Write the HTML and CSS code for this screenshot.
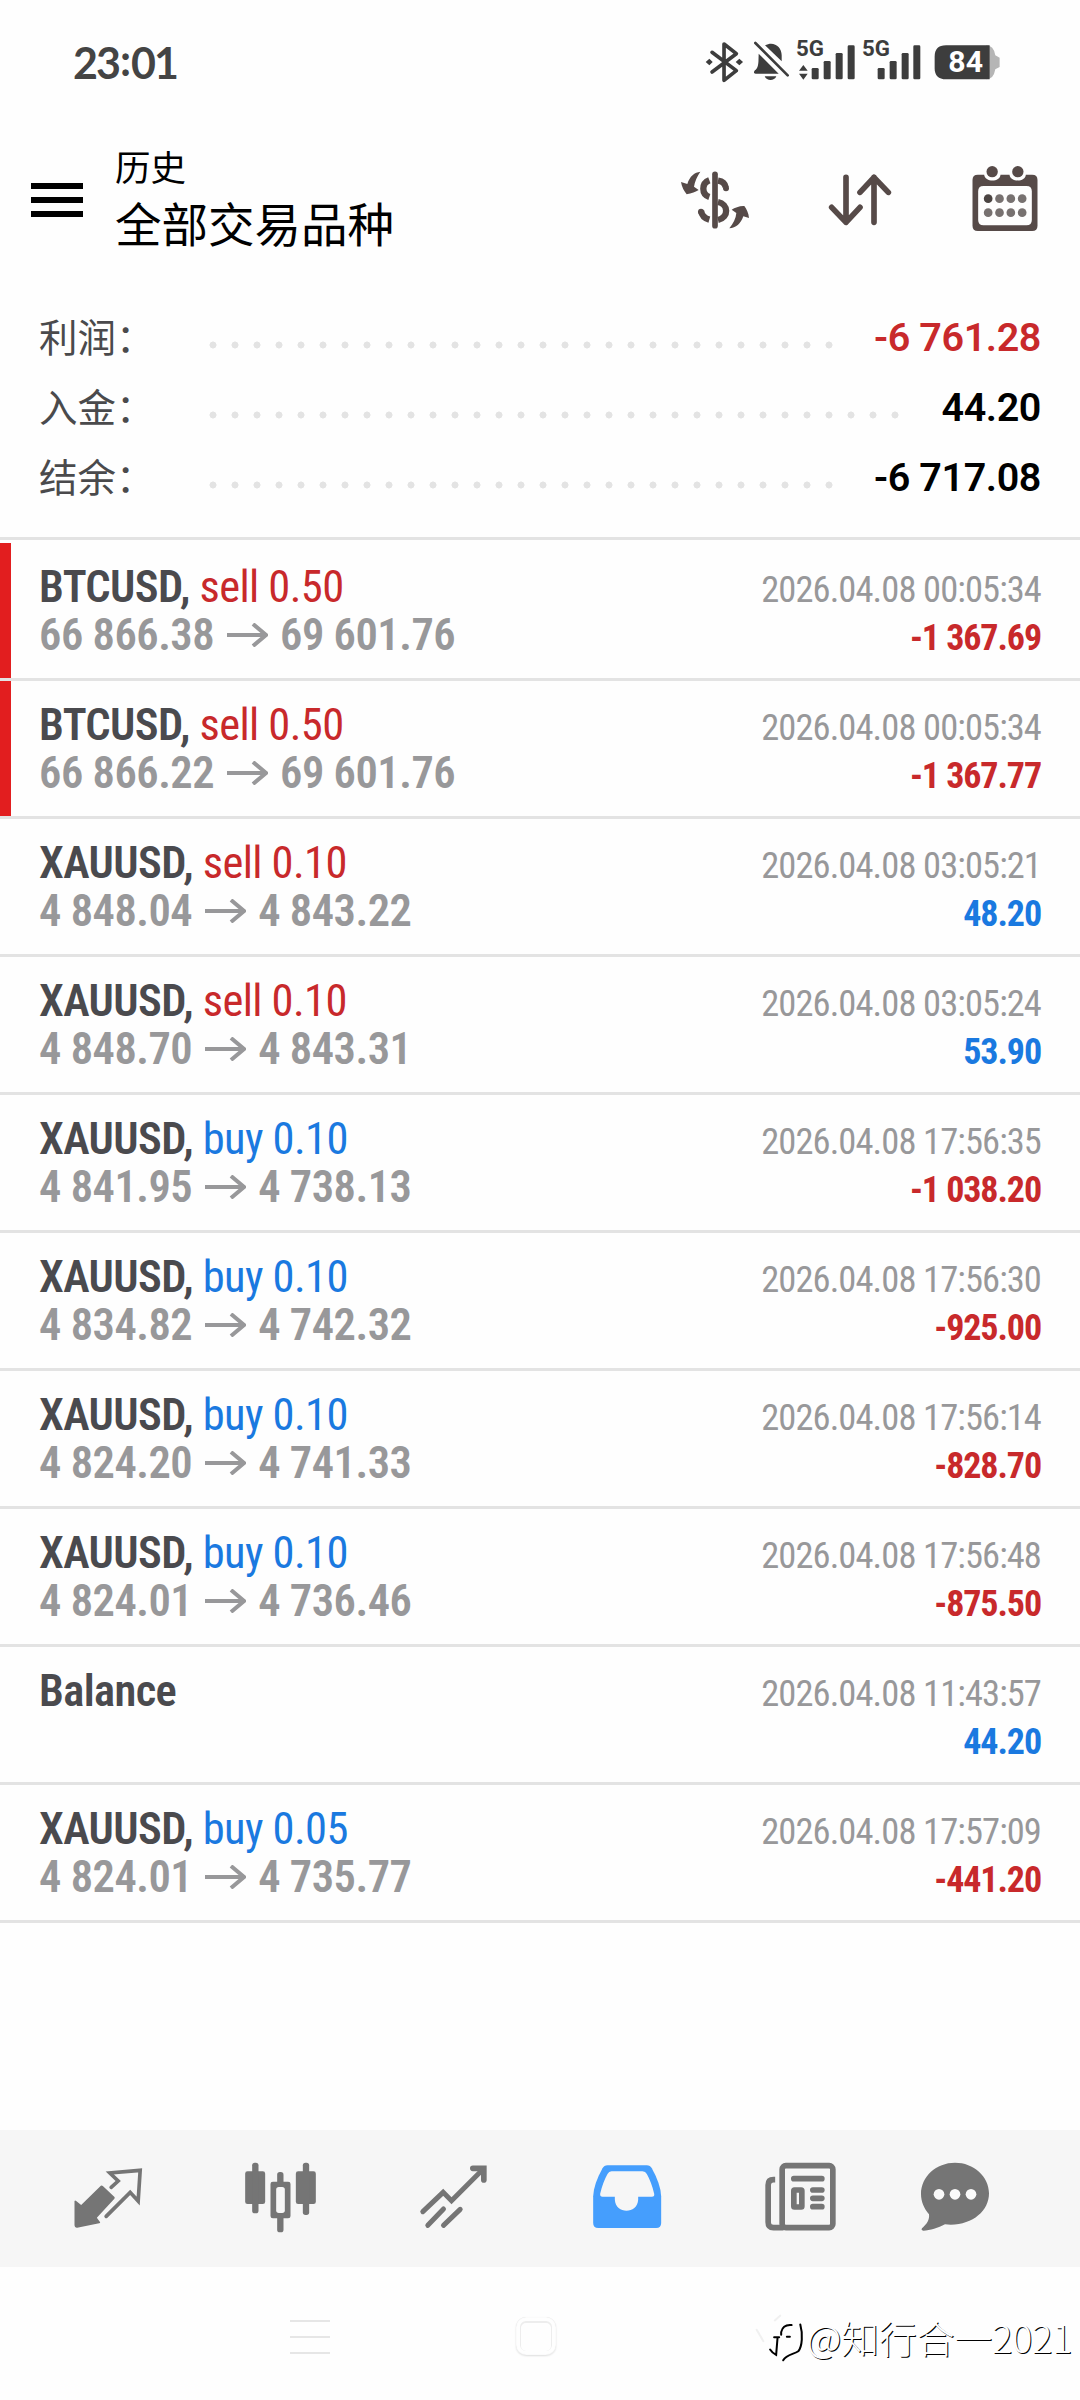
FILE: index.html
```html
<!DOCTYPE html>
<html lang="zh-CN">
<head>
<meta charset="utf-8">
<title>历史</title>
<link rel="stylesheet" href="styles.css">
</head>
<body>
<div class="statusbar">
  <span class="clock">23<span class="colon">:</span>01</span>
  <svg class="status-icons" viewBox="130 110 900 140">
    <g fill="none" stroke="#3d3d3d" stroke-width="11" stroke-linejoin="round" stroke-linecap="round">
      <path d="M157 159L230 214L193 243V134L230 163L157 218"/>
      <path d="M287 131L384 228" stroke-width="8"/>
    </g>
    <g fill="#3d3d3d">
      <path d="M138 188l11-10 10 10-10 10zM228 188l11-10 11 10-11 10z"/>
      <path d="M316 138C342 124 366 142 366 168V186ZM297 163L357 223H288C280 222 282 215 288 211C298 203 296 184 297 163ZM315 231H350C344 246 321 246 315 231Z"/>
      <path d="M418 214L431 197L444 214ZM418 223L431 241L444 223Z"/>
      <rect x="456" y="206" width="21" height="34" rx="4"/><rect x="492" y="185" width="21" height="55" rx="4"/><rect x="528" y="161" width="21" height="79" rx="4"/><rect x="564" y="138" width="21" height="102" rx="4"/>
      <rect x="654" y="206" width="21" height="34" rx="4"/><rect x="690" y="185" width="21" height="55" rx="4"/><rect x="726" y="161" width="21" height="79" rx="4"/><rect x="761" y="138" width="21" height="102" rx="4"/>
      <path d="M980 138Q1002 138 1007 168L1020 175V203L1007 210Q1002 240 980 240Z" fill="#b5b5b5"/>
      <path d="M859 138H990V240H859Q825 240 825 206V172Q825 138 859 138Z"/>
      <text class="net" x="409" y="171" textLength="84" lengthAdjust="spacingAndGlyphs">5G</text>
      <text class="net" x="607" y="171" textLength="84" lengthAdjust="spacingAndGlyphs">5G</text>
    </g>
    <text class="battery" x="866" y="219" textLength="104" lengthAdjust="spacingAndGlyphs">84</text>
  </svg>
</div>

<header class="header">
  <div class="menu"><i></i><i></i><i></i></div>
  <div class="titles">
    <div class="title">历史</div>
    <div class="subtitle">全部交易品种</div>
  </div>
  <div class="actions">
    <svg viewBox="45 480 240 240" fill="none" stroke="#564a48" stroke-linecap="round">
      <path d="M165 523V677" stroke-width="17"/>
      <g stroke-width="19" stroke-linecap="butt">
        <path d="M148 541C124 550 124 583 148 591"/>
        <path d="M174 542C187 544 195 550 197 562"/><path d="M174 606C205 612 208 652 174 660"/>
        <path d="M148 659C134 655 125 644 123 632"/>
      </g>
      <circle cx="198" cy="565" r="9" fill="#564a48" stroke="none"/><circle cx="123" cy="635" r="9" fill="#564a48" stroke="none"/>
      <g fill="#564a48" stroke="none">
        <path d="M121 515C104 517 89 528 82 552L63 546C65 561 73 574 80 583C94 581 108 575 116 570L102 560C104 545 112 528 121 515Z"/>
        <path d="M208 685C228 684 242 672 250 649L267 654C266 640 260 628 253 618C239 617 225 623 215 629L229 639C228 655 219 671 208 685Z"/>
      </g>
    </svg>
    <svg viewBox="483 480 240 240" fill="none" stroke="#564a48" stroke-width="17" stroke-linecap="round" stroke-linejoin="round">
      <path d="M561 532V667M518 622L561 667L603 622M645 667V532M603 577L645 532L688 577"/>
    </svg>
    <svg viewBox="916.5 480 240 240">
      <path fill="#564a48" fill-rule="evenodd" d="M955 524H974C976 547 1022 547 1023 524H1050C1052 547 1098 547 1099 524H1118Q1134 524 1134 540V677Q1134 693 1118 693H955Q939 693 939 677V540Q939 524 955 524ZM972 558Q956 558 956 574V660Q956 676 972 676H1101Q1117 676 1117 660V574Q1117 558 1101 558Z"/>
      <g fill="#564a48"><circle cx="998" cy="515" r="17"/><circle cx="1075" cy="515" r="17"/></g>
      <g fill="#777170"><circle cx="986" cy="596" r="13" fill="#4b4442"/><circle cx="1020" cy="596" r="13"/><circle cx="1054" cy="596" r="13"/><circle cx="1088" cy="596" r="13"/><circle cx="986" cy="638" r="13"/><circle cx="1020" cy="638" r="13"/><circle cx="1054" cy="638" r="13"/><circle cx="1088" cy="638" r="13"/></g>
    </svg>
  </div>
</header>

<section class="summary">
  <div class="sum-row"><span class="label">利润：</span><span class="dots"></span><span class="value loss">-6 761.28</span></div>
  <div class="sum-row"><span class="label">入金：</span><span class="dots long"></span><span class="value">44.20</span></div>
  <div class="sum-row"><span class="label">结余：</span><span class="dots"></span><span class="value">-6 717.08</span></div>
</section>

<main class="deals">
  <div class="deal marked"><div class="line"><span class="name"><b>BTCUSD,</b> <span class="sell">sell 0.50</span></span><time>2026.04.08 00:05:34</time></div><div class="line"><span class="prices">66 866.38<svg class="arrow" viewBox="0 0 41 24"><path d="M0 12H39M26 1L39 12L26 23"/></svg>69 601.76</span><span class="profit loss">-1 367.69</span></div></div>
  <div class="deal marked"><div class="line"><span class="name"><b>BTCUSD,</b> <span class="sell">sell 0.50</span></span><time>2026.04.08 00:05:34</time></div><div class="line"><span class="prices">66 866.22<svg class="arrow" viewBox="0 0 41 24"><path d="M0 12H39M26 1L39 12L26 23"/></svg>69 601.76</span><span class="profit loss">-1 367.77</span></div></div>
  <div class="deal"><div class="line"><span class="name"><b>XAUUSD,</b> <span class="sell">sell 0.10</span></span><time>2026.04.08 03:05:21</time></div><div class="line"><span class="prices">4 848.04<svg class="arrow" viewBox="0 0 41 24"><path d="M0 12H39M26 1L39 12L26 23"/></svg>4 843.22</span><span class="profit gain">48.20</span></div></div>
  <div class="deal"><div class="line"><span class="name"><b>XAUUSD,</b> <span class="sell">sell 0.10</span></span><time>2026.04.08 03:05:24</time></div><div class="line"><span class="prices">4 848.70<svg class="arrow" viewBox="0 0 41 24"><path d="M0 12H39M26 1L39 12L26 23"/></svg>4 843.31</span><span class="profit gain">53.90</span></div></div>
  <div class="deal"><div class="line"><span class="name"><b>XAUUSD,</b> <span class="buy">buy 0.10</span></span><time>2026.04.08 17:56:35</time></div><div class="line"><span class="prices">4 841.95<svg class="arrow" viewBox="0 0 41 24"><path d="M0 12H39M26 1L39 12L26 23"/></svg>4 738.13</span><span class="profit loss">-1 038.20</span></div></div>
  <div class="deal"><div class="line"><span class="name"><b>XAUUSD,</b> <span class="buy">buy 0.10</span></span><time>2026.04.08 17:56:30</time></div><div class="line"><span class="prices">4 834.82<svg class="arrow" viewBox="0 0 41 24"><path d="M0 12H39M26 1L39 12L26 23"/></svg>4 742.32</span><span class="profit loss">-925.00</span></div></div>
  <div class="deal"><div class="line"><span class="name"><b>XAUUSD,</b> <span class="buy">buy 0.10</span></span><time>2026.04.08 17:56:14</time></div><div class="line"><span class="prices">4 824.20<svg class="arrow" viewBox="0 0 41 24"><path d="M0 12H39M26 1L39 12L26 23"/></svg>4 741.33</span><span class="profit loss">-828.70</span></div></div>
  <div class="deal"><div class="line"><span class="name"><b>XAUUSD,</b> <span class="buy">buy 0.10</span></span><time>2026.04.08 17:56:48</time></div><div class="line"><span class="prices">4 824.01<svg class="arrow" viewBox="0 0 41 24"><path d="M0 12H39M26 1L39 12L26 23"/></svg>4 736.46</span><span class="profit loss">-875.50</span></div></div>
  <div class="deal"><div class="line"><span class="name"><b>Balance</b></span><time>2026.04.08 11:43:57</time></div><div class="line"><span class="prices">&nbsp;</span><span class="profit gain">44.20</span></div></div>
  <div class="deal"><div class="line"><span class="name"><b>XAUUSD,</b> <span class="buy">buy 0.05</span></span><time>2026.04.08 17:57:09</time></div><div class="line"><span class="prices">4 824.01<svg class="arrow" viewBox="0 0 41 24"><path d="M0 12H39M26 1L39 12L26 23"/></svg>4 735.77</span><span class="profit loss">-441.20</span></div></div>
</main>

<nav class="tabs">
  <svg viewBox="25.5 25 240 240">
    <path fill="#757575" d="M124 108Q127 106 130 109L165 142Q167 145 164 148L112 204L122 218Q122 221 119 221L53 234Q45 235 45 227V154Q47 151 50 154L65 166Z"/>
    <path fill="none" stroke="#757575" stroke-width="11" stroke-linecap="round" d="M155 113L176 94L151 70L242 62L236 154L212 128L140 200"/>
  </svg>
  <svg viewBox="544.5 25 240 240" fill="#757575">
    <rect x="557" y="65" width="60" height="98" rx="7"/><rect x="578" y="39" width="19" height="152" rx="8"/>
    <rect x="709" y="65" width="60" height="98" rx="7"/><rect x="730" y="39" width="19" height="157" rx="8"/>
    <rect x="653" y="67" width="19" height="40" rx="8"/><rect x="653" y="195" width="19" height="53" rx="8"/>
    <rect x="633" y="96" width="60" height="110" rx="7"/><rect x="650" y="112" width="26" height="78" rx="8" fill="#f6f6f6"/>
  </svg>
  <svg viewBox="1063.5 25 240 240" fill="none" stroke="#757575" stroke-width="15" stroke-linecap="round" stroke-linejoin="miter">
    <path d="M1090 186L1151 128L1176 153L1272 57M1105 227L1152 178M1152 227L1202 179"/>
    <path stroke-width="17" d="M1240 56H1273V91"/>
  </svg>
  <svg viewBox="22.5 25 240 240">
    <path fill="#459efd" d="M84 47H202Q212 47 217 56Q244 105 245 140V220Q245 235 230 235H56Q41 235 41 220V140Q42 105 69 56Q74 47 84 47Z"/>
    <path fill="#f6f6f6" d="M96 65H189Q198 65 202 73Q216 98 224 132Q226 141 217 141H176V150C174 194 108 194 106 150V141H69Q61 141 62 132Q70 98 84 73Q88 65 96 65Z"/>
  </svg>
  <svg viewBox="541.5 25 240 240" fill="none" stroke="#757575" stroke-width="17">
    <rect x="608" y="48" width="152" height="186" rx="11"/>
    <path d="M587 90H582Q566 90 566 106V218Q566 234 582 234H612"/>
    <path stroke-linecap="round" d="M643 87H727M700 121H727M700 146H727M700 171H727"/>
    <rect x="643" y="121" width="24" height="51" rx="2"/>
  </svg>
  <svg viewBox="1005 25 240 240">
    <path fill="#757575" d="M1125 39C1181 39 1227 80 1227 131C1227 187 1171 232 1095 224C1075 235 1050 243 1030 243Q1022 242 1026 236C1042 222 1049 210 1047 194C1032 176 1023 156 1023 133C1023 80 1069 39 1125 39Z"/>
    <g fill="#fafafa"><circle cx="1077" cy="134" r="16"/><circle cx="1125" cy="134" r="16"/><circle cx="1173" cy="134" r="16"/></g>
  </svg>
</nav>

<footer class="system">
  <div class="recent"><i></i><i></i><i></i></div>
  <div class="home"></div>
  <div class="mark">
    <svg viewBox="25 75 155 155" fill="none" stroke="#000" stroke-width="6" stroke-linecap="round">
      <path stroke="#f0f0f0" d="M100 86L84 100M30 128L50 162"/>
      <path d="M134 114C114 112 106 122 103 135V143M97 150H82M120 149H129M92 154L88 203C82 200 75 195 70 187"/>
      <path d="M160 112C168 140 166 178 154 192C140 202 120 200 109 219"/>
    </svg>
    <span>@知行合一2021</span>
  </div>
</footer>
</body>
</html>
```
FILE: styles.css
```css
* { box-sizing: border-box; }
body { margin: 0; width: 1080px; height: 2400px; display: flex; flex-direction: column; background: #fefefe; font-family: Roboto, "Noto Sans CJK SC", sans-serif; overflow: hidden; }
svg { display: block; flex: none; }

.statusbar { height: 120px; padding: 36px 77px 0 73px; display: flex; justify-content: space-between; align-items: flex-start; }
.clock { font: 700 43px/54px Lato, sans-serif; letter-spacing: -2px; color: #444; }
.clock .colon { position: relative; top: -3px; letter-spacing: 0; margin-left: 1px; }
.status-icons { width: 300px; height: 46.67px; }
.net { font: 700 64px Roboto, sans-serif; }
.battery { font: 700 86px Roboto, sans-serif; fill: #fff; }

.header { height: 160px; padding: 0 35px 0 31px; display: flex; align-items: center; }
.menu { width: 52px; display: flex; flex-direction: column; gap: 8px; }
.menu i { height: 6px; background: #000; }
.titles { margin: -8px 0 0 32px; color: #000; flex: 1; font-family: "Noto Sans CJK SC", sans-serif; }
.title { font-size: 35.5px; line-height: 52px; }
.subtitle { font-size: 46.5px; line-height: 60px; }
.actions { display: flex; gap: 65px; }
.actions svg { width: 80px; height: 80px; }

.summary { height: 260px; padding: 23px 39px 0; border-bottom: 3px solid #e3e3e3; }
.sum-row { height: 70px; display: flex; align-items: center; }
.label { width: 162.5px; margin-top: -6px; font: 38.5px/70px "Noto Sans CJK SC", sans-serif; color: #4a4a4c; }
.dots { width: 638px; height: 22px; margin-top: 14px; background: radial-gradient(circle at 11px 11px, #e3e3e3 3.2px, transparent 3.8px) 0 0 / 22px 22px; }
.dots.long { width: 704px; }
.value { margin-left: auto; font-weight: 600; font-size: 39.5px; letter-spacing: -0.4px; line-height: 72px; color: #000; white-space: nowrap; }

.value.loss, .loss { color: #c8292b; }
.gain { color: #1a79e0; }

.deals { padding-top: 3px; font-family: "Roboto Condensed", Roboto, sans-serif; }
.deal { height: 138px; padding: 20px 39px 0 39px; border-bottom: 3px solid #e3e3e3; }
.deal.marked { background: linear-gradient(#e21e1f, #e21e1f) 0 0 / 11px 100% no-repeat; }
.line { height: 48px; line-height: 48px; display: flex; justify-content: space-between; align-items: baseline; white-space: nowrap; }
.name { font-size: 44.5px; letter-spacing: -0.6px; color: #4a4a4e; }
.name b { font-weight: 600; }
.sell { color: #c8292b; }
.buy { color: #1a79e0; }
time { font-size: 36.5px; letter-spacing: -0.9px; color: #98989a; }
.prices { display: flex; align-items: center; font-size: 44.5px; letter-spacing: -0.5px; font-weight: 600; color: #98989a; }
.arrow { width: 41px; height: 24px; margin: 0 12px 0 13px; fill: none; stroke: #98989a; stroke-width: 4; }
.profit { font-size: 36px; font-weight: 700; letter-spacing: -1.1px; }

.tabs { margin-top: auto; height: 137px; padding: 0 0 1px 21px; background: #f6f6f6; display: grid; grid-template-columns: repeat(5, 173px) 137px; justify-items: center; align-items: center; }
.tabs svg { width: 80px; height: 80px; }

.system { height: 133px; padding: 50px 8px 0 290px; display: flex; align-items: flex-start; }
.recent { width: 40px; margin-top: 3px; display: flex; flex-direction: column; gap: 14px; }
.recent i { height: 2px; background: #e6e6e6; }
.home { width: 40px; height: 38px; margin-left: 186px; border-radius: 10px; box-shadow: inset 0 0 1px #ddd, inset 0 0 0 4px #fefefe, inset 0 1px 0 5px #ededed, 0 1px 2px #dedede; }
.mark { margin-left: auto; margin-top: -5px; display: flex; }
.mark svg { width: 52px; height: 52px; }
.mark span { font: 300 38px/50px "Noto Sans CJK SC", sans-serif; letter-spacing: -0.3px; color: #fff; text-shadow: 1px 1px 0 #000; white-space: nowrap; }
```
